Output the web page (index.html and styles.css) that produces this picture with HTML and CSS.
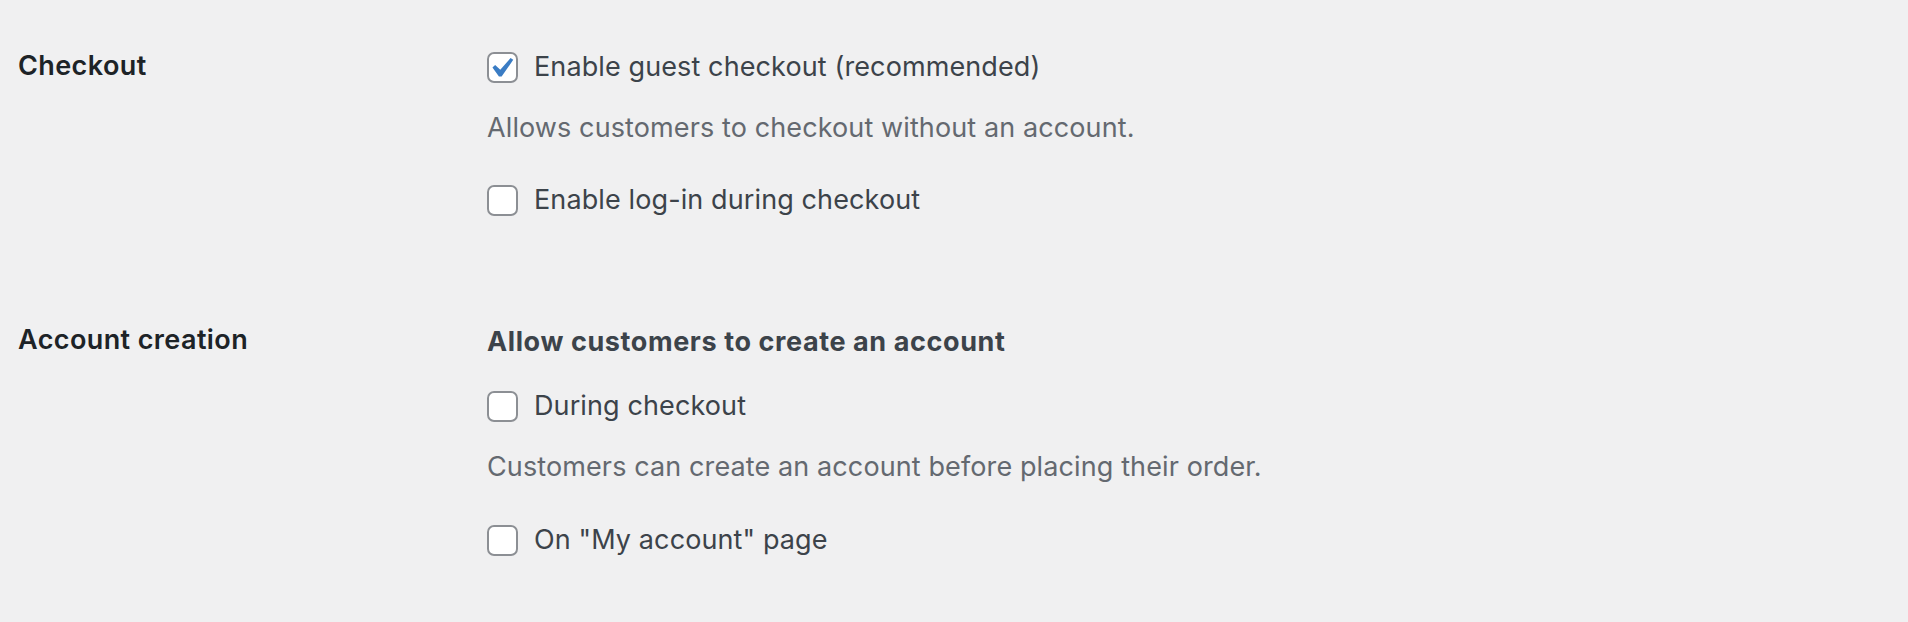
FILE: index.html
```html
<!DOCTYPE html>
<html lang="en">
<head>
<meta charset="utf-8">
<title>Checkout settings</title>
<link rel="stylesheet" href="styles.css">
</head>
<body>
<div class="settings">
  <section class="row row-checkout">
    <h2 class="row-label">Checkout</h2>
    <div class="row-field">
      <label class="option">
        <span class="box checked"><svg viewBox="3.3 1.9 15 15.5" aria-hidden="true"><path d="M14.83 4.89l1.34.94-5.81 8.38H9.02L5.78 9.67l1.34-1.25 2.57 2.4z"/></svg></span>
        <span class="option-text">Enable guest checkout (recommended)</span>
      </label>
      <p class="desc">Allows customers to checkout without an account.</p>
      <label class="option option-after-desc">
        <span class="box"></span>
        <span class="option-text">Enable log-in during checkout</span>
      </label>
    </div>
  </section>
  <section class="row row-account">
    <h2 class="row-label">Account creation</h2>
    <div class="row-field">
      <p class="field-title">Allow customers to create an account</p>
      <label class="option option-after-title">
        <span class="box"></span>
        <span class="option-text">During checkout</span>
      </label>
      <p class="desc">Customers can create an account before placing their order.</p>
      <label class="option option-after-desc">
        <span class="box"></span>
        <span class="option-text">On "My account" page</span>
      </label>
    </div>
  </section>
</div>
</body>
</html>
```
FILE: styles.css
```css
html, body {
  margin: 0;
  padding: 0;
  background: #f0f0f1;
}
body {
  font-family: Inter, "Noto Sans", "Liberation Sans", sans-serif;
  font-size: 27px;
  letter-spacing: 0.11px;
  color: #3c434a;
}
.settings {
  padding: 49px 0 0 18px;
}
.row {
  display: grid;
  grid-template-columns: 469px 1fr;
  align-items: start;
}
.row-account {
  margin-top: 106px;
}
.row-label {
  margin: 0;
  font-size: 27px;
  font-weight: 600;
  letter-spacing: 0.4px;
  line-height: 33px;
  color: #1d2327;
}
.row-account .row-label {
  margin-top: -1px;
}
.row-field {
  display: flex;
  flex-direction: column;
  align-items: flex-start;
}
.option {
  display: flex;
  align-items: center;
  gap: 16px;
  height: 36px;
  line-height: 36px;
}
.box {
  width: 31px;
  height: 31px;
  flex: none;
  box-sizing: border-box;
  border-radius: 7px;
  background: #fff;
  box-shadow: inset 0 0 0 2px #8c8f94;
  display: block;
}
.box svg {
  display: block;
  width: 100%;
  height: 100%;
  fill: #3a7cc4;
}
.desc {
  margin: 25px 0 0;
  line-height: 36px;
  color: #646970;
}
.option-after-desc {
  margin-top: 36px;
}
.field-title {
  margin: 0;
  line-height: 36px;
  font-weight: 700;
  letter-spacing: 0.6px;
  color: #3c434a;
}
.option-after-title {
  margin-top: 28px;
}
.row-account .desc {
  margin-top: 25px;
}
.row-account .option-after-desc {
  margin-top: 37px;
}
```
